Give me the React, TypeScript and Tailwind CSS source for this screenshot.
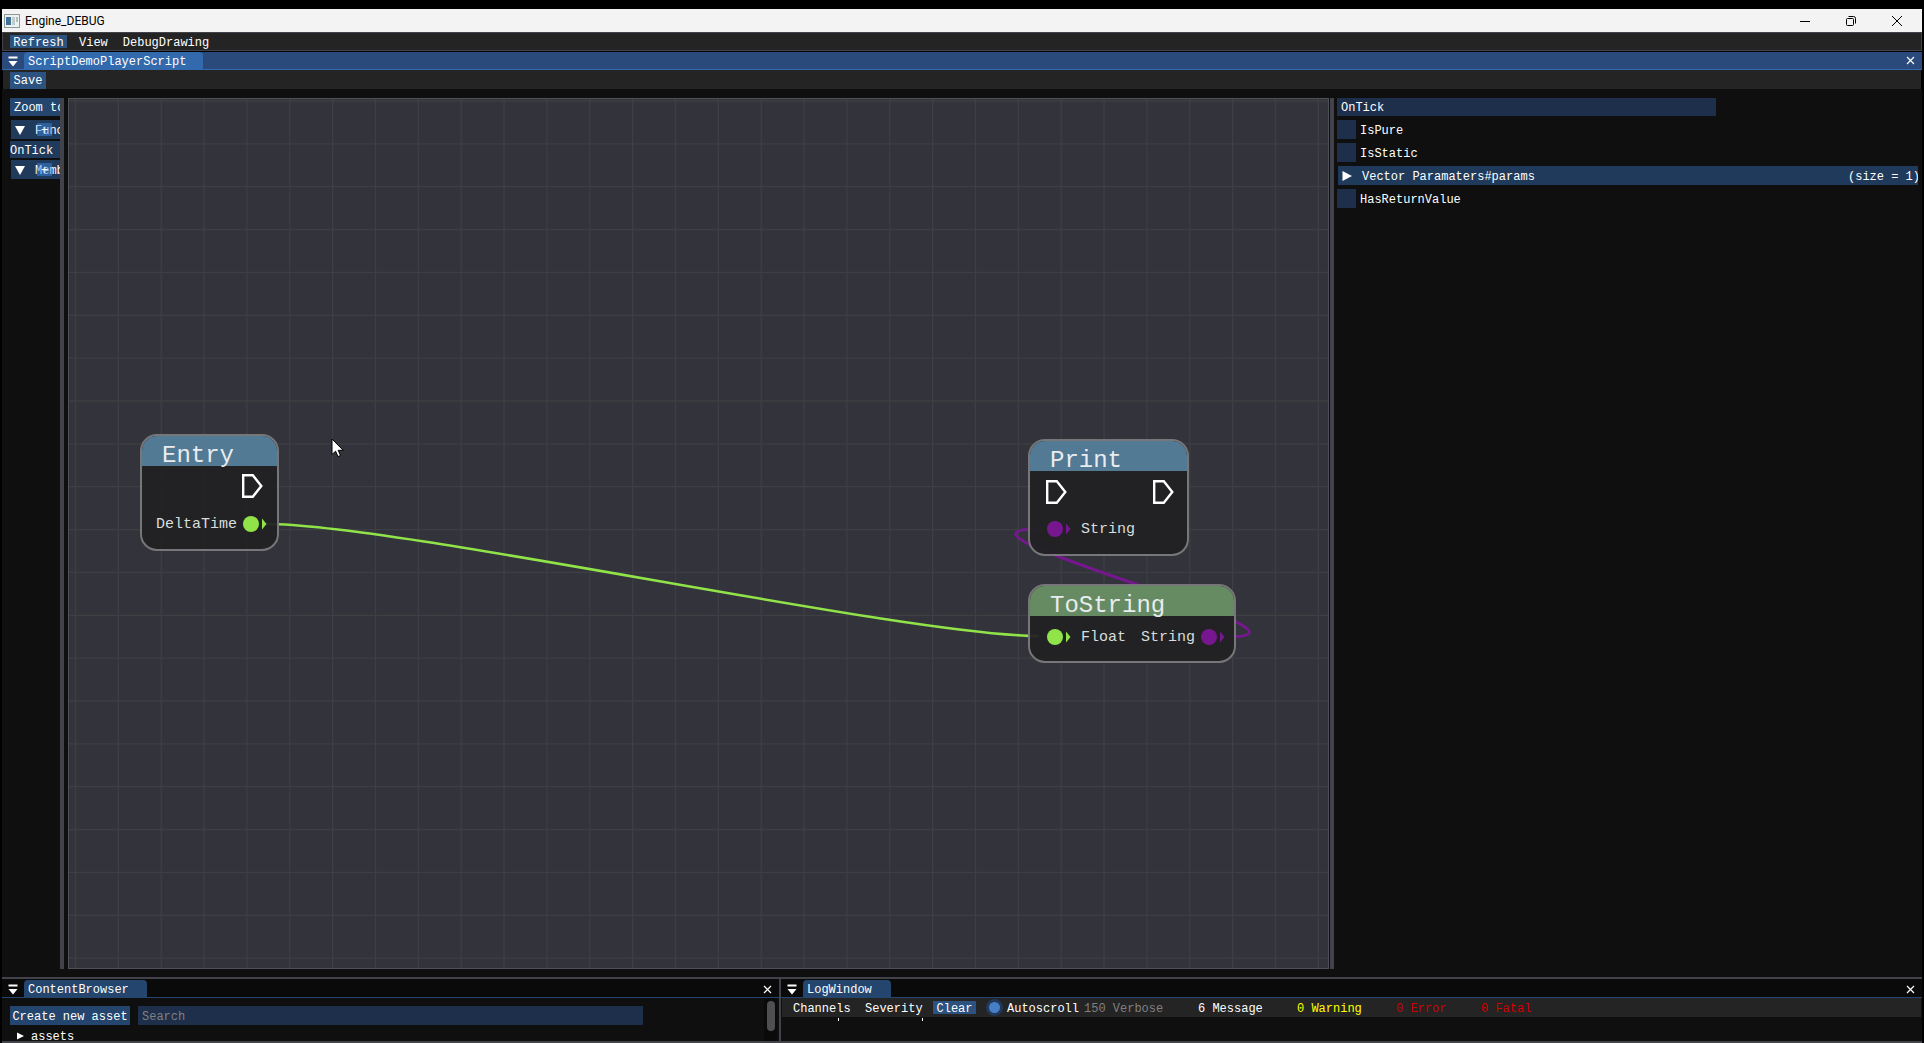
import React from "react";

const STEP = 300 / 7;

function Collapse() {
  return (
    <button aria-label="Window menu" className="flex h-4 w-[22px] shrink-0 justify-center text-white">
      <svg width="10" height="16" viewBox="0 0 10 16" fill="currentColor">
        <path d="M0.500 3.500h9v2h-9zM0.500 8h9L5 13.500z" />
      </svg>
    </button>
  );
}

function CloseX() {
  return (
    <button aria-label="Close" className="mr-1.5 ml-auto flex h-4 w-3 shrink-0 items-center justify-center text-white">
      <svg width="9" height="9" viewBox="0 0 9 9" stroke="currentColor" strokeWidth="1.2">
        <path d="M1 1l7 7M8 1L1 8" />
      </svg>
    </button>
  );
}

function Triangle({ down = false }: { down?: boolean }) {
  return (
    <svg className="shrink-0" width="10" height="10" viewBox="0 0 10 10" fill="#fff">
      <path d={down ? "M0 1h10L5 10z" : "M0.500 0v10L10 5z"} />
    </svg>
  );
}

function ExecPin() {
  return (
    <svg width="22" height="26" viewBox="0 0 22 26" fill="none" stroke="#fff" strokeWidth="2.4">
      <path d="M2.2 2.2h9.6L20.3 13l-8.5 10.8H2.2z" />
    </svg>
  );
}

function DataPin({ color }: { color: string }) {
  return (
    <svg className="shrink-0" width="24" height="16" viewBox="0 0 24 16" fill={color}>
      <circle cx="8" cy="8" r="8" />
      <path d="M19 2.500l4.500 5.500-4.500 5.500z" />
    </svg>
  );
}

function Node({ title, head, place, children }: { title: string; head: string; place: string; children: React.ReactNode }) {
  return (
    <section className={`absolute overflow-hidden rounded-[17px] border-2 border-[#77777a] bg-[#222223]/95 text-[15px] leading-4 text-[#d8dede] ${place}`}>
      <h2 className={`h-[30px] pl-5 text-2xl leading-10 text-[#e9ecee] ${head}`}>{title}</h2>
      {children}
    </section>
  );
}

function Canvas() {
  const v = Array.from({ length: 30 }, (_, i) => 6.5 + i * STEP);
  const h = Array.from({ length: 21 }, (_, i) => 2 + i * STEP);
  return (
    <main className="relative min-w-0 flex-1 overflow-hidden border border-[#505058] bg-[#33333b]">
      <svg className="absolute inset-0 h-full w-full" fill="none">
        <g stroke="#3e3f42" strokeWidth="1.3">
          {v.map((x) => <line key={x} x1={x} x2={x} y1="0" y2="100%" />)}
          {h.map((y) => <line key={y} x1="0" x2="100%" y1={y} y2={y} />)}
        </g>
        <path d="M197 425C330 425 837 537 970 537" stroke="#91e34a" strokeWidth="2.6" />
        <path d="M1157 538C1284 538 843 430 970 430" stroke="#77178f" strokeWidth="3" />
      </svg>
      <Node title="Entry" head="bg-[#527a95]" place="left-[71px] top-[335px] h-[117px] w-[139px]">
        <div className="flex h-10 items-center justify-end pr-3.5"><ExecPin /></div>
        <div className="flex h-9 items-center justify-end gap-1.5 pr-2.5"><span className="pt-0.5">DeltaTime</span><DataPin color="#91e34a" /></div>
      </Node>
      <Node title="Print" head="bg-[#527a95]" place="left-[959px] top-[340px] h-[117px] w-[161px]">
        <div className="flex h-[42px] items-center justify-between pr-[13px] pl-[15px]"><ExecPin /><ExecPin /></div>
        <div className="flex h-8 items-center gap-2.5 pl-[17px]"><DataPin color="#77178f" /><span className="pt-0.5">String</span></div>
      </Node>
      <Node title="ToString" head="bg-[#668b63]" place="left-[959px] top-[485px] h-[79px] w-[208px]">
        <div className="flex h-[42px] items-center pr-[9px] pl-[17px]">
          <DataPin color="#91e34a" />
          <span className="pt-0.5 pl-2.5">Float</span>
          <span className="mr-1.5 ml-auto pt-0.5">String</span>
          <DataPin color="#77178f" />
        </div>
      </Node>
      <svg className="absolute top-[339px] left-[262px]" width="13" height="20" viewBox="0 0 13 20">
        <path d="M1 1v15.500l3.600-3.300 2.300 5.400 2.600-1.100-2.300-5.200h5z" fill="#fff" stroke="#000" strokeWidth="1" />
      </svg>
    </main>
  );
}

function Check({ id, label }: { id: string; label: string }) {
  return (
    <div className="flex h-[19px] items-center gap-1">
      <input id={id} type="checkbox" className="h-[19px] w-[19px] appearance-none bg-[#1d2f4a] checked:bg-[#4296fa]" />
      <label htmlFor={id} className="pt-0.5">{label}</label>
    </div>
  );
}

function Group({ label }: { label: string }) {
  return (
    <div className="relative ml-px flex h-[19px] shrink-0 items-center bg-[#203a5c] pl-1">
      <Triangle down />
      <span className="pt-0.5 pl-2.5">{label}</span>
      <button aria-label={`Add to ${label}`} className="absolute top-[3px] left-[26px] h-[13px] w-[15px] bg-[#3d85e0]/50 pt-0.5 leading-3">+</button>
    </div>
  );
}

export default function App() {
  return (
    <div className="flex h-screen flex-col overflow-hidden bg-black px-0.5 pt-[9px] font-['Liberation_Mono',monospace] text-xs leading-4 whitespace-nowrap text-white">
      <header className="flex h-[23px] shrink-0 items-center bg-[#f3f3f3] pl-0.5 font-['Roboto',sans-serif] text-black">
        <svg width="16" height="14" viewBox="0 0 16 14">
          <rect x="0.500" y="0.500" width="15" height="13" fill="#eef1f1" stroke="#8d9a9a" />
          <rect x="2" y="3" width="5" height="8" fill="#3f7296" />
          <rect x="8" y="3" width="3" height="8" fill="#c3cccc" />
          <rect x="12" y="3" width="2" height="5" fill="#b3c0c0" />
        </svg>
        <h1 className="pl-[5px]">Engine_DEBUG</h1>
        <div className="ml-auto flex items-center gap-9 pr-5">
          <button aria-label="Minimize"><svg width="10" height="10" viewBox="0 0 10 10" stroke="#000"><path d="M0 5.500h10" /></svg></button>
          <button aria-label="Restore"><svg width="10" height="10" viewBox="0 0 10 10" stroke="#000" fill="none"><rect x="0.500" y="2.500" width="7" height="7" rx="1" /><path d="M2.500 0.500h5a2 2 0 0 1 2 2v5" /></svg></button>
          <button aria-label="Close window"><svg width="10" height="10" viewBox="0 0 10 10" stroke="#000"><path d="M0 0l10 10M10 0L0 10" /></svg></button>
        </div>
      </header>

      <nav className="mb-px flex h-[19px] shrink-0 items-center border border-[#42424a] bg-[#242424] pl-[7px]">
        <button className="h-[13px] w-[57px] bg-[#2c527f] pt-0.5 leading-3">Refresh</button>
        <button className="ml-3 pt-0.5">View</button>
        <button className="ml-[15px] pt-0.5">DebugDrawing</button>
      </nav>

      <div className="flex h-[18px] shrink-0 items-center border-b border-[#3369ad] bg-[#294a7a]">
        <Collapse />
        <button className="h-[17px] w-[179px] rounded-t bg-[#3369ad] pt-0.5 pl-1 text-left">ScriptDemoPlayerScript</button>
        <CloseX />
      </div>

      <nav className="mx-px flex h-[19px] shrink-0 items-center bg-[#242424] pt-0.5 pl-[7px]">
        <button className="h-[17px] w-9 bg-[#2c527f]">Save</button>
      </nav>

      <div className="flex min-h-0 flex-1 bg-[#0f0f0f] pt-[9px] pb-2">
        <aside className="flex w-[58px] shrink-0 flex-col overflow-hidden pl-2">
          <button className="mb-1 h-[18px] w-24 shrink-0 bg-[#24456d] pt-0.5 pl-1 text-left">Zoom to content</button>
          <Group label="Functions" />
          <button className="my-0.5 h-[17px] shrink-0 bg-[#203a5c] pt-0.5 text-left">OnTick</button>
          <Group label="Members" />
        </aside>
        <div className="mr-1 w-1 shrink-0 bg-[#42424a]" />
        <Canvas />
        <div className="ml-px w-1 shrink-0 bg-[#42424a]" />
        <aside className="flex w-[588px] shrink-0 flex-col gap-1 pr-1 pl-[3px]">
          <input aria-label="Function name" defaultValue="OnTick" className="h-[18px] w-[379px] bg-[#1d2f4a] px-1 pt-0.5 outline-none" />
          <Check id="pure" label="IsPure" />
          <Check id="static" label="IsStatic" />
          <button className="ml-px flex h-[19px] items-center overflow-hidden bg-[#203a5c] pl-1">
            <Triangle />
            <span className="pt-0.5 pl-2.5">Vector Paramaters#params</span>
            <span className="ml-auto w-[70px] pt-0.5 text-left">(size = 1)</span>
          </button>
          <Check id="ret" label="HasReturnValue" />
        </aside>
      </div>

      <div className="flex h-[66px] shrink-0 gap-0.5 border-t-2 border-b-2 border-[#42424a] bg-[#42424a]">
        <section className="flex w-[777px] shrink-0 flex-col bg-[#0f0f0f]">
          <div className="flex h-[19px] shrink-0 items-end border-b border-[#24456d] bg-[#0a0a0a]">
            <Collapse />
            <button className="h-[17px] w-[123px] rounded-t bg-[#24456d] pt-0.5 pl-1 text-left">ContentBrowser</button>
            <CloseX />
          </div>
          <div className="flex min-h-0 flex-1">
            <div className="flex-1 overflow-hidden pt-2 pl-2">
              <div className="flex gap-2">
                <button className="h-[19px] w-[120px] bg-[#24456d] pt-0.5">Create new asset</button>
                <input aria-label="Search" placeholder="Search" className="h-[19px] w-[505px] bg-[#1d2f4a] px-1 pt-0.5 outline-none placeholder:text-[#808080]" />
              </div>
              <button className="mt-0.5 flex items-center gap-[7px] pl-[7px]">
                <svg className="shrink-0" width="7" height="8" viewBox="0 0 7 8" fill="#fff"><path d="M0 0.500v7L7 4z" /></svg>
                <span className="pt-0.5">assets</span>
              </button>
            </div>
            <div className="mr-0.5 w-[13px] bg-[#0a0a0a] px-[3px] pt-[3px]"><div className="h-[30px] w-2 rounded-full bg-[#4f4f52]" /></div>
          </div>
        </section>
        <section className="flex min-w-0 flex-1 flex-col bg-[#0f0f0f]">
          <div className="flex h-[19px] shrink-0 items-end border-b border-[#24456d] bg-[#0a0a0a]">
            <Collapse />
            <button className="h-[17px] w-[88px] rounded-t bg-[#24456d] pt-0.5 pl-1 text-left">LogWindow</button>
            <CloseX />
          </div>
          <div className="mx-px flex h-[19px] shrink-0 items-center bg-[#242424] pl-[11px]">
            <button className="w-[72px] pt-0.5 text-left">Channels</button>
            <button className="w-[68px] pt-0.5 text-left">Severity</button>
            <button className="h-[13px] w-[43px] bg-[#2c527f] pt-0.5 leading-3">Clear</button>
            <input id="scroll" type="radio" defaultChecked className="ml-2.5 h-[17px] w-[17px] appearance-none rounded-full border-[3px] border-[#22375a] bg-[#467fc6]" />
            <label htmlFor="scroll" className="w-[81px] pt-0.5 pl-1">Autoscroll</label>
            <span className="w-[114px] pt-0.5 text-[#808080]">150 Verbose</span>
            <span className="w-[99px] pt-0.5">6 Message</span>
            <span className="w-[99px] pt-0.5 text-[#ffff00]">0 Warning</span>
            <span className="w-[85px] pt-0.5 text-[#d00000]">0 Error</span>
            <span className="pt-0.5 text-[#d00000]">0 Fatal</span>
          </div>
          <div className="flex pt-px pl-[57px]">
            <i className="mr-[83px] h-[3px] w-px bg-white" />
            <i className="h-[3px] w-px bg-white" />
          </div>
        </section>
      </div>
    </div>
  );
}
